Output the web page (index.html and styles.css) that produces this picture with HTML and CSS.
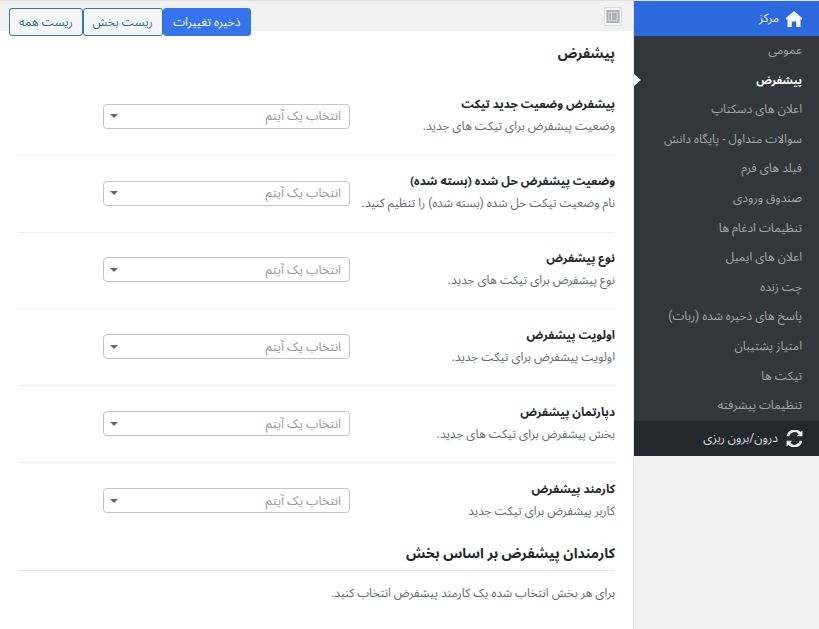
FILE: index.html
```html
<!DOCTYPE html>
<html lang="fa" dir="rtl">
<head>
    <meta charset="utf-8">
    <title>پیشفرض</title>
    <link rel="stylesheet" href="styles.css">
</head>
<body>
    <div class="panel">
        <aside class="sidebar">
            <div class="side-head">
                <svg class="home-icon" viewBox="0 0 16 16"><path d="M8 0 0 7v1.600h1.500V16h4.300v-5.600h4.400V16h4.300V8.600H16V7z"/></svg>
                <span>مرکز</span>
            </div>
            <ul class="side-menu">
                <li>عمومی</li>
                <li class="active">پیشفرض</li>
                <li>اعلان های دسکتاپ</li>
                <li>سوالات متداول - پایگاه دانش</li>
                <li>فیلد های فرم</li>
                <li>صندوق ورودی</li>
                <li>تنظیمات ادغام ها</li>
                <li>اعلان های ایمیل</li>
                <li>چت زنده</li>
                <li>پاسخ های ذخیره شده (ربات)</li>
                <li>امتیاز پشتیبان</li>
                <li>تیکت ها</li>
                <li>تنظیمات پیشرفته</li>
            </ul>
            <div class="side-foot">
                <svg class="sync-icon" viewBox="0 0 16 16"><path d="M13.600 1.900 15.500.4v5.500H10l2-2A5.200 5.200 0 0 0 3 5.800H.6a7.600 7.600 0 0 1 13-3.900zM2.400 14.100.5 15.600v-5.500H6l-2 2a5.200 5.200 0 0 0 9-1.900h2.400a7.600 7.600 0 0 1-13 3.900z"/></svg>
                <span>درون/برون ریزی</span>
            </div>
        </aside>

        <main class="content">
            <div class="toolbar">
                <span class="screen-btn">
                    <svg viewBox="0 0 14 14"><rect width="14" height="14" fill="#adb0b2"/><path d="M2.500 2.500h9v9h-9zM5.500 2.500v9" fill="none" stroke="#dcdedf"/></svg>
                </span>
                <div class="actions">
                    <button class="btn btn-save">ذخیره تغییرات</button>
                    <button class="btn">ریست بخش</button>
                    <button class="btn">ریست همه</button>
                </div>
            </div>

            <div class="body">
                <h2 class="title">پیشفرض</h2>

                <div class="row">
                    <div class="label">
                        <h4>پیشفرض وضعیت جدید تیکت</h4>
                        <p>وضعیت پیشفرض برای تیکت های جدید.</p>
                    </div>
                    <div class="select"><span>انتخاب یک آیتم</span><b></b></div>
                </div>
                <div class="row">
                    <div class="label">
                        <h4>وضعیت پیشفرض حل شده (بسته شده)</h4>
                        <p>نام وضعیت تیکت حل شده (بسته شده) را تنظیم کنید.</p>
                    </div>
                    <div class="select"><span>انتخاب یک آیتم</span><b></b></div>
                </div>
                <div class="row">
                    <div class="label">
                        <h4>نوع پیشفرض</h4>
                        <p>نوع پیشفرض برای تیکت های جدید.</p>
                    </div>
                    <div class="select"><span>انتخاب یک آیتم</span><b></b></div>
                </div>
                <div class="row">
                    <div class="label">
                        <h4>اولویت پیشفرض</h4>
                        <p>اولویت پیشفرض برای تیکت جدید.</p>
                    </div>
                    <div class="select"><span>انتخاب یک آیتم</span><b></b></div>
                </div>
                <div class="row">
                    <div class="label">
                        <h4>دپارتمان پیشفرض</h4>
                        <p>بخش پیشفرض برای تیکت های جدید.</p>
                    </div>
                    <div class="select"><span>انتخاب یک آیتم</span><b></b></div>
                </div>
                <div class="row last">
                    <div class="label">
                        <h4>کارمند پیشفرض</h4>
                        <p>کاربر پیشفرض برای تیکت جدید</p>
                    </div>
                    <div class="select"><span>انتخاب یک آیتم</span><b></b></div>
                </div>

                <h3 class="sub-title">کارمندان پیشفرض بر اساس بخش</h3>
                <p class="sub-desc">برای هر بخش انتخاب شده یک کارمند پیشفرض انتخاب کنید.</p>
            </div>
        </main>
    </div>
</body>
</html>
```

FILE: styles.css
```css
html, body {
    margin: 0;
    height: 100%;
    overflow: hidden;
}
body {
    background: #f1f1f1;
    font-family: Roboto, "Noto Sans Arabic", "Noto Sans", sans-serif;
    font-size: 12px;
    color: #23282d;
}
h2, h3, h4, p, ul {
    margin: 0;
    padding: 0;
}

.panel {
    display: flex;
    height: 629px;
    border-top: 1px solid #e2e2e2;
    box-sizing: border-box;
}

/* sidebar */
.sidebar {
    width: 185px;
    flex: none;
    align-self: flex-start;
}
.side-head {
    display: flex;
    align-items: center;
    gap: 7px;
    height: 35px;
    padding-right: 17px;
    background: #2d6ae0;
    color: #e8effc;
}
.home-icon {
    width: 16px;
    height: 16px;
    fill: #f4f7fd;
}
.side-menu {
    list-style: none;
    background: #32373c;
}
.side-menu li {
    height: 29.6px;
    line-height: 29px;
    padding-right: 17px;
    color: #a4a7aa;
    white-space: nowrap;
}
.side-menu .active {
    position: relative;
    color: #fff;
    font-size: 11px;
    font-weight: bold;
}
.side-menu .active::after {
    content: "";
    position: absolute;
    right: 100%;
    top: 8px;
    margin-right: -7px;
    border: 6px solid transparent;
    border-right: 0;
    border-left: 7px solid #fff;
}
.side-foot {
    display: flex;
    align-items: center;
    gap: 8px;
    height: 35px;
    padding-right: 16px;
    background: #23282d;
    color: #ddd;
}
.sync-icon {
    width: 17px;
    height: 17px;
    fill: #eee;
}

/* content */
.content {
    flex: 1;
    background: #fff;
    border-right: 1px solid #e5e5e5;
    min-width: 0;
}
.toolbar {
    display: flex;
    align-items: center;
    justify-content: space-between;
    height: 30px;
    padding: 0 11px 0 9px;
    background: #f1f1f1;
}
.screen-btn {
    width: 18px;
    height: 19px;
    box-sizing: border-box;
    border: 1px solid #dcdcdc;
    background: #f7f7f7;
    padding: 2px 1px;
    display: flex;
}
.screen-btn svg {
    width: 14px;
    height: 13px;
}
.actions {
    display: flex;
    align-self: flex-start;
    margin-top: 7px;
}
.btn {
    height: 28px;
    padding: 0 9px;
    border: 1px solid #2c7dab;
    border-radius: 3px;
    background: #f3f5f6;
    color: #2271b1;
    font-family: inherit;
    font-size: 12px;
}
.btn-save {
    padding: 0 9.500px;
    background: #3574ee;
    border-color: #3574ee;
    color: #fff;
}

.body {
    padding: 0 18px;
}
.title {
    height: 48px;
    padding-top: 12px;
    box-sizing: border-box;
    font-size: 13.800px;
    font-weight: bold;
    line-height: 20px;
}
.row {
    display: flex;
    align-items: center;
    height: 76.800px;
    box-sizing: border-box;
    border-bottom: 1px solid #eee;
}
.row.last {
    border-bottom: 0;
}
.label {
    width: 265px;
    flex: none;
    margin-top: -3px;
}
.label h4 {
    font-size: 11.800px;
    font-weight: bold;
    line-height: 20px;
}
.label p {
    margin-top: 2px;
    font-size: 12px;
    line-height: 20px;
    color: #646970;
    white-space: nowrap;
}
.select {
    width: 247px;
    height: 25px;
    margin-top: -1px;
    box-sizing: border-box;
    border: 1px solid #c4c4c4;
    border-radius: 4px;
    display: flex;
    align-items: center;
    justify-content: space-between;
    padding: 0 8px 0 6px;
    color: #999;
    font-size: 12.500px;
}
.select b {
    border: 4px solid transparent;
    border-top: 4px solid #666;
    border-bottom: 0;
}
.sub-title {
    font-size: 14px;
    font-weight: bold;
    line-height: 24px;
    padding-bottom: 5px;
    border-bottom: 1px solid #e5e5e5;
    margin-top: 1px;
}
.sub-desc {
    margin-top: 12px;
    font-size: 12px;
    line-height: 20px;
    color: #646970;
}
```
